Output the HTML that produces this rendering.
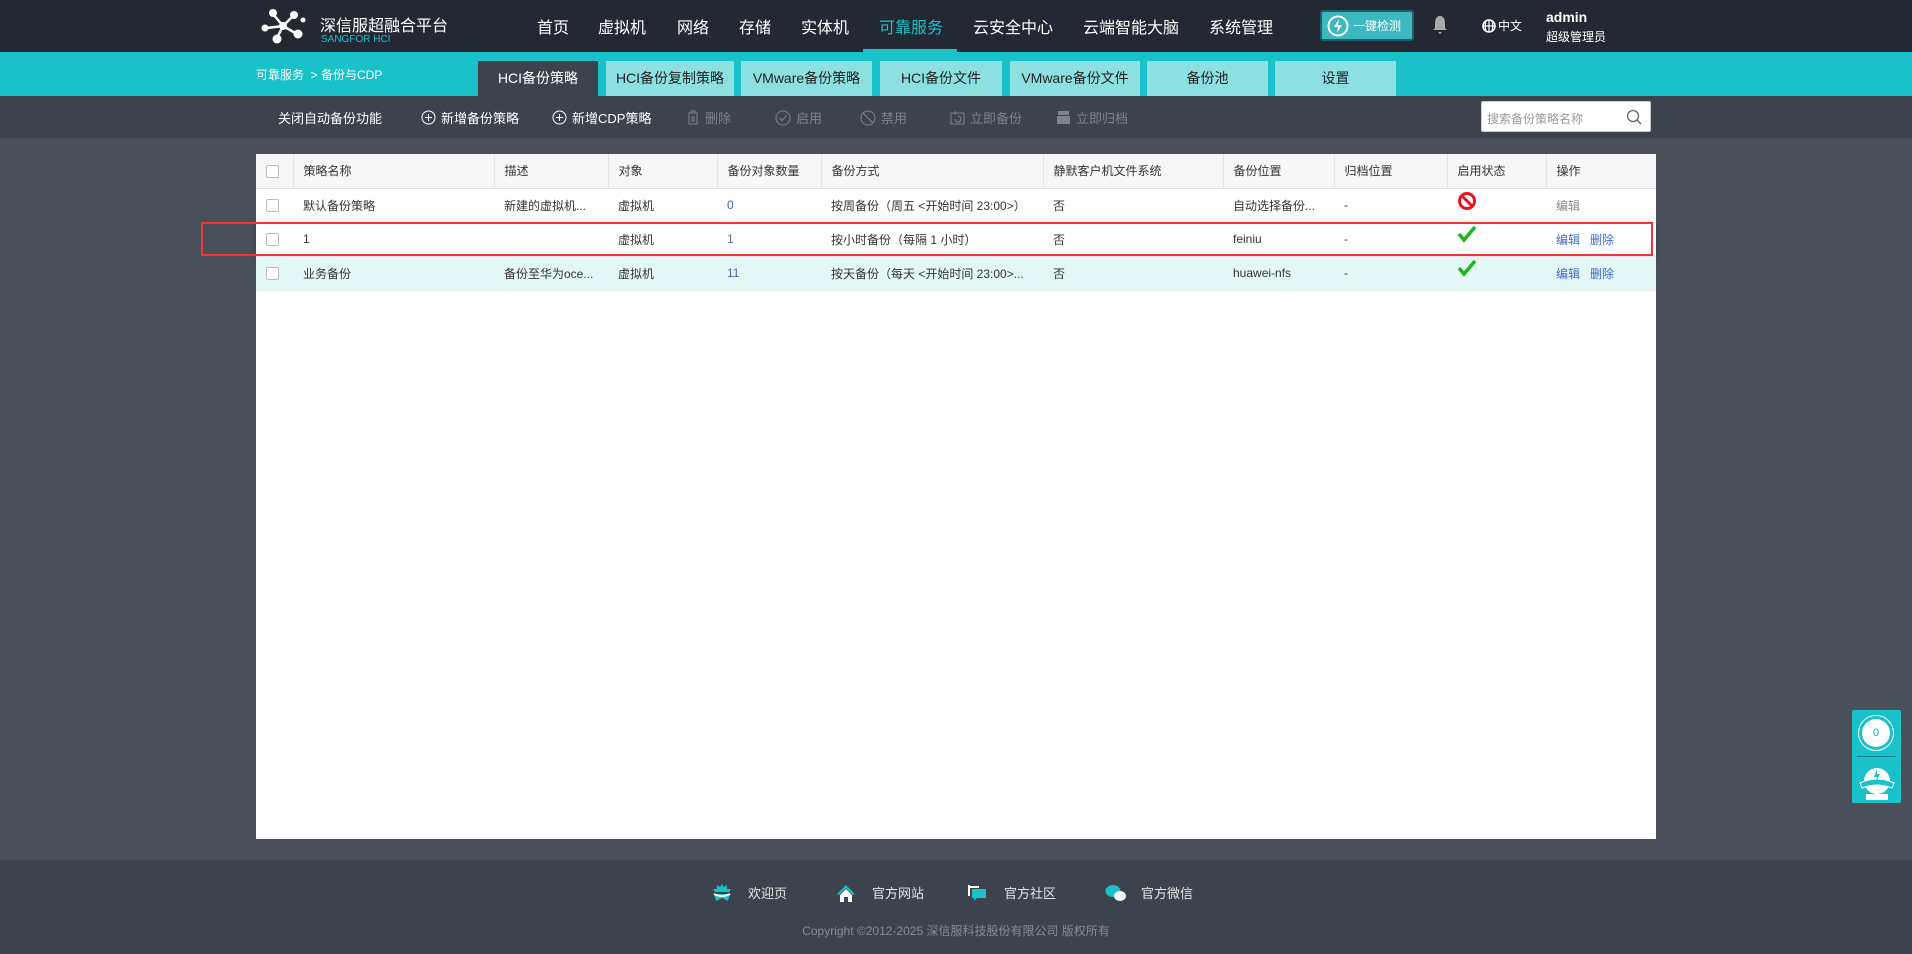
<!DOCTYPE html>
<html><head><meta charset="utf-8">
<style>
*{margin:0;padding:0;box-sizing:border-box}
body{width:1912px;height:954px;background:#4a5059;font-family:"Liberation Sans","Noto Sans CJK SC",sans-serif;position:relative;overflow:hidden}
.abs{position:absolute}
#hdr{left:0;top:0;width:1912px;height:52px;background:#242833}
.nav{top:14px;font-size:16px;color:#fff;white-space:nowrap}
#teal{left:0;top:52px;width:1912px;height:44px;background:#19c1c8}
.tab{top:61px;height:35px;background:#8ce0e2;color:#222;font-size:14px;text-align:center;line-height:35px}
#tool{left:0;top:96px;width:1912px;height:42px;background:#3d434c}
.ti{top:108px;font-size:13px;color:#fff;white-space:nowrap;display:flex;align-items:center;gap:5px}
.ti.dis{color:#7d838a}
#tbl{left:256px;top:154px;width:1400px;height:685px;background:#fff}
table{border-collapse:collapse;width:1400px;font-size:12px;color:#333}
td{height:34px;padding-left:10px;border-bottom:1px solid #e8e8e8;white-space:nowrap}
thead td{background:#f7f7f7;border-right:1px solid #e6e6e6;border-bottom:1px solid #ddd}
.cb{display:inline-block;width:13px;height:13px;border:1px solid #bbb;border-radius:2px;background:#fff;vertical-align:middle}
.num{color:#4a63a8}
.lk{color:#3a6cc0;margin-right:10px}
#foot{left:0;top:860px;width:1912px;height:94px;background:#3d434c}
.fi{top:883px;font-size:13px;color:#e5e5e5;display:flex;align-items:center;gap:14px}
</style></head><body>
<div id="hdr" class="abs"></div>
<svg class="abs" style="left:259px;top:6px" width="50" height="40" viewBox="0 0 50 40">
<g stroke="#fff" stroke-width="2.5"><line x1="24" y1="20" x2="14" y2="8"/><line x1="24" y1="20" x2="34" y2="10"/><line x1="24" y1="20" x2="18" y2="32"/><line x1="24" y1="20" x2="38" y2="28"/><line x1="24" y1="20" x2="8" y2="22"/></g>
<g fill="#fff"><circle cx="24" cy="20" r="4"/><circle cx="14" cy="7" r="4"/><circle cx="35" cy="9" r="4"/><circle cx="6" cy="22" r="3.5"/><circle cx="18" cy="33" r="4.5"/><circle cx="39" cy="28" r="4.5"/><circle cx="44" cy="14" r="2.5"/></g></svg>
<div class="abs" style="left:320px;top:12px;font-size:16px;color:#fff">深信服超融合平台</div>
<div class="abs" style="left:321px;top:34px;font-size:10px;color:#19c1c8">SANGFOR HCI</div>
<div class="abs nav" style="left:537px">首页</div>
<div class="abs nav" style="left:598px">虚拟机</div>
<div class="abs nav" style="left:677px">网络</div>
<div class="abs nav" style="left:739px">存储</div>
<div class="abs nav" style="left:801px">实体机</div>
<div class="abs nav" style="left:879px;color:#19c1c8">可靠服务</div>
<div class="abs" style="left:863px;top:49px;width:94px;height:3px;background:#19c1c8"></div>
<div class="abs nav" style="left:973px">云安全中心</div>
<div class="abs nav" style="left:1083px">云端智能大脑</div>
<div class="abs nav" style="left:1209px">系统管理</div>
<div class="abs" style="left:1320px;top:10px;width:94px;height:31px;background:#3cb8c0;border:2px solid #1e5f70;border-radius:3px;color:#fff;font-size:12px;display:flex;align-items:center;padding-left:5px;gap:4px">
<svg width="22" height="22" viewBox="0 0 22 22"><circle cx="11" cy="11" r="9.5" fill="none" stroke="#fff" stroke-width="2"/><path d="M12 4 L7 12 H11 L10 18 L15 10 H11Z" fill="#fff"/></svg>一键检测</div>
<svg class="abs" style="left:1432px;top:15px" width="16" height="20" viewBox="0 0 16 20"><path d="M8 1 C4 1 3 5 3 9 V13 L1 15 H15 L13 13 V9 C13 5 12 1 8 1Z M6 17 H10 L8 19Z" fill="#aaa"/></svg>
<svg class="abs" style="left:1482px;top:19px" width="14" height="14" viewBox="0 0 14 14"><circle cx="7" cy="7" r="6" fill="none" stroke="#fff" stroke-width="1.6"/><path d="M1 7H13M7 1V13M4 2C3 5 3 9 4 12M10 2C11 5 11 9 10 12" stroke="#fff" stroke-width="1.2" fill="none"/></svg>
<div class="abs" style="left:1498px;top:17px;font-size:12px;color:#fff">中文</div>
<div class="abs" style="left:1546px;top:9px;font-size:14px;font-weight:bold;color:#fff">admin</div>
<div class="abs" style="left:1546px;top:28px;font-size:12px;color:#fff">超级管理员</div>

<div id="teal" class="abs"></div>
<div class="abs" style="left:256px;top:66px;font-size:12px;color:#fff">可靠服务 &nbsp;&gt; 备份与CDP</div>
<div class="abs tab" style="left:478px;width:120px;background:#3d434c;color:#fff">HCI备份策略</div>
<div class="abs tab" style="left:606px;width:128px">HCI备份复制策略</div>
<div class="abs tab" style="left:741px;width:131px">VMware备份策略</div>
<div class="abs tab" style="left:880px;width:122px">HCI备份文件</div>
<div class="abs tab" style="left:1010px;width:130px">VMware备份文件</div>
<div class="abs tab" style="left:1147px;width:121px">备份池</div>
<div class="abs tab" style="left:1275px;width:121px">设置</div>

<div id="tool" class="abs"></div>
<div class="abs ti" style="left:278px">关闭自动备份功能</div>
<div class="abs ti" style="left:421px"><svg width="15" height="15"><circle cx="7.5" cy="7.5" r="6.5" fill="none" stroke="#fff"/><path d="M7.5 4V11M4 7.5H11" stroke="#fff"/></svg>新增备份策略</div>
<div class="abs ti" style="left:552px"><svg width="15" height="15"><circle cx="7.5" cy="7.5" r="6.5" fill="none" stroke="#fff"/><path d="M7.5 4V11M4 7.5H11" stroke="#fff"/></svg>新增CDP策略</div>
<div class="abs ti dis" style="left:686px"><svg width="14" height="15"><path d="M2 3H12M5 3V1H9V3M3 4V14H11V4M6 6V12M8 6V12" stroke="#7d838a" fill="none"/></svg>删除</div>
<div class="abs ti dis" style="left:775px"><svg width="16" height="16"><circle cx="8" cy="8" r="7" fill="none" stroke="#7d838a"/><path d="M4.5 8L7 10.5L11.5 5.5" stroke="#7d838a" fill="none"/></svg>启用</div>
<div class="abs ti dis" style="left:860px"><svg width="16" height="16"><circle cx="8" cy="8" r="7" fill="none" stroke="#7d838a"/><path d="M3 3L13 13" stroke="#7d838a"/></svg>禁用</div>
<div class="abs ti dis" style="left:950px"><svg width="15" height="15"><rect x="1" y="3" width="13" height="11" fill="none" stroke="#7d838a"/><path d="M5 1V5M5 9A3 3 0 1 0 8 6" stroke="#7d838a" fill="none"/></svg>立即备份</div>
<div class="abs ti dis" style="left:1056px"><svg width="15" height="15"><rect x="2" y="1" width="11" height="4" fill="#7d838a"/><rect x="1" y="6" width="13" height="8" fill="#7d838a"/></svg>立即归档</div>
<div class="abs" style="left:1481px;top:101px;width:170px;height:31px;background:#fff;border:1px solid #ccc;border-radius:2px;font-size:12px;color:#999;padding:8px 0 0 5px">搜索备份策略名称
<svg style="position:absolute;right:8px;top:7px" width="16" height="17"><circle cx="7" cy="7" r="5.5" fill="none" stroke="#666" stroke-width="1.3"/><path d="M11 11L15 15" stroke="#666" stroke-width="1.3"/></svg></div>

<div id="tbl" class="abs">
<table>
<colgroup><col style="width:37px"><col style="width:201px"><col style="width:114px"><col style="width:109px"><col style="width:104px"><col style="width:222px"><col style="width:180px"><col style="width:111px"><col style="width:113px"><col style="width:99px"><col style="width:110px"></colgroup>
<thead><tr><td><span class="cb"></span></td><td>策略名称</td><td>描述</td><td>对象</td><td>备份对象数量</td><td>备份方式</td><td>静默客户机文件系统</td><td>备份位置</td><td>归档位置</td><td>启用状态</td><td style="border-right:none">操作</td></tr></thead>
<tr><td><span class="cb"></span></td><td>默认备份策略</td><td>新建的虚拟机...</td><td>虚拟机</td><td class="num">0</td><td>按周备份（周五 &lt;开始时间 23:00&gt;）</td><td>否</td><td>自动选择备份...</td><td>-</td><td><svg width="20" height="20" style="margin-top:-6px"><circle cx="10" cy="10" r="7.5" fill="none" stroke="#e8141c" stroke-width="3"/><path d="M5 5L15 15" stroke="#e8141c" stroke-width="3"/></svg></td><td style="color:#888">编辑</td></tr>
<tr style="box-shadow:0 2px 6px rgba(0,0,0,.25)"><td><span class="cb"></span></td><td>1</td><td></td><td>虚拟机</td><td class="num">1</td><td>按小时备份（每隔 1 小时）</td><td>否</td><td>feiniu</td><td>-</td><td><svg width="20" height="18" style="margin-top:-8px"><path d="M2 9L7 15L18 2" stroke="#1fb51f" stroke-width="3.5" fill="none"/></svg></td><td><span class="lk">编辑</span><span class="lk">删除</span></td></tr>
<tr style="background:#e4f7f7"><td><span class="cb"></span></td><td>业务备份</td><td>备份至华为oce...</td><td>虚拟机</td><td class="num">11</td><td>按天备份（每天 &lt;开始时间 23:00&gt;...</td><td>否</td><td>huawei-nfs</td><td>-</td><td><svg width="20" height="18" style="margin-top:-8px"><path d="M2 9L7 15L18 2" stroke="#1fb51f" stroke-width="3.5" fill="none"/></svg></td><td><span class="lk">编辑</span><span class="lk">删除</span></td></tr>
</table>
</div>
<div class="abs" style="left:201px;top:222px;width:1452px;height:34px;border:2px solid #f0363c"></div>

<div class="abs" style="left:1852px;top:710px;width:49px;height:93px;background:#19c1c8;border-radius:2px"></div>
<div class="abs" style="left:1858px;top:715px;width:36px;height:36px;border:1.5px solid #fff;border-radius:50%"></div>
<div class="abs" style="left:1862px;top:719px;width:28px;height:28px;background:#fff;border-radius:50%;color:#19a0a8;font-size:11px;text-align:center;line-height:28px">0</div>
<div class="abs" style="left:1857px;top:756px;width:39px;height:1px;background:#117c84"></div>
<svg class="abs" style="left:1856px;top:763px" width="42" height="38" viewBox="0 0 42 38"><circle cx="21" cy="18" r="13" fill="#fff"/><path d="M4 20Q21 12 38 20L36 25Q21 19 6 25Z" fill="#19c1c8" stroke="#fff"/><path d="M21 6L18 14H21L20 19L24 11H21Z" fill="#19c1c8"/><path d="M10 31H32V37H10Z" fill="#fff"/></svg>

<div id="foot" class="abs"></div>
<div class="abs fi" style="left:712px"><svg width="20" height="18"><path d="M10 0L12 3L15 1L15 5L19 5L17 8L3 8L1 5L5 5L5 1L8 3Z M2 10H18L16 17L10 14L4 17Z" fill="#19c1c8"/><path d="M2 10Q10 14 18 10" stroke="#fff" stroke-width="2" fill="none"/></svg><span style="margin-left:2px">欢迎页</span></div>
<div class="abs fi" style="left:836px"><svg width="20" height="18"><path d="M10 1L1 10L3 11L10 4L17 11L19 10Z" fill="#19c1c8"/><path d="M4 11L10 5L16 11V18H12V13H8V18H4Z" fill="#fff"/></svg><span style="margin-left:2px">官方网站</span></div>
<div class="abs fi" style="left:967px"><svg width="20" height="18"><path d="M1 1H3V2H12V4H3V12H1Z" fill="#fff"/><path d="M5 5H19V14H10L7 17V14H5Z" fill="#19c1c8"/></svg><span style="margin-left:3px">官方社区</span></div>
<div class="abs fi" style="left:1105px"><svg width="22" height="18"><ellipse cx="8" cy="7" rx="7.5" ry="6" fill="#19c1c8"/><ellipse cx="15" cy="12" rx="6" ry="5" fill="#fff"/></svg><span style="margin-left:0">官方微信</span></div>
<div class="abs" style="left:0;width:1912px;top:922px;text-align:center;font-size:12px;color:#888d93">Copyright ©2012-2025 深信服科技股份有限公司 版权所有</div>
</body></html>
